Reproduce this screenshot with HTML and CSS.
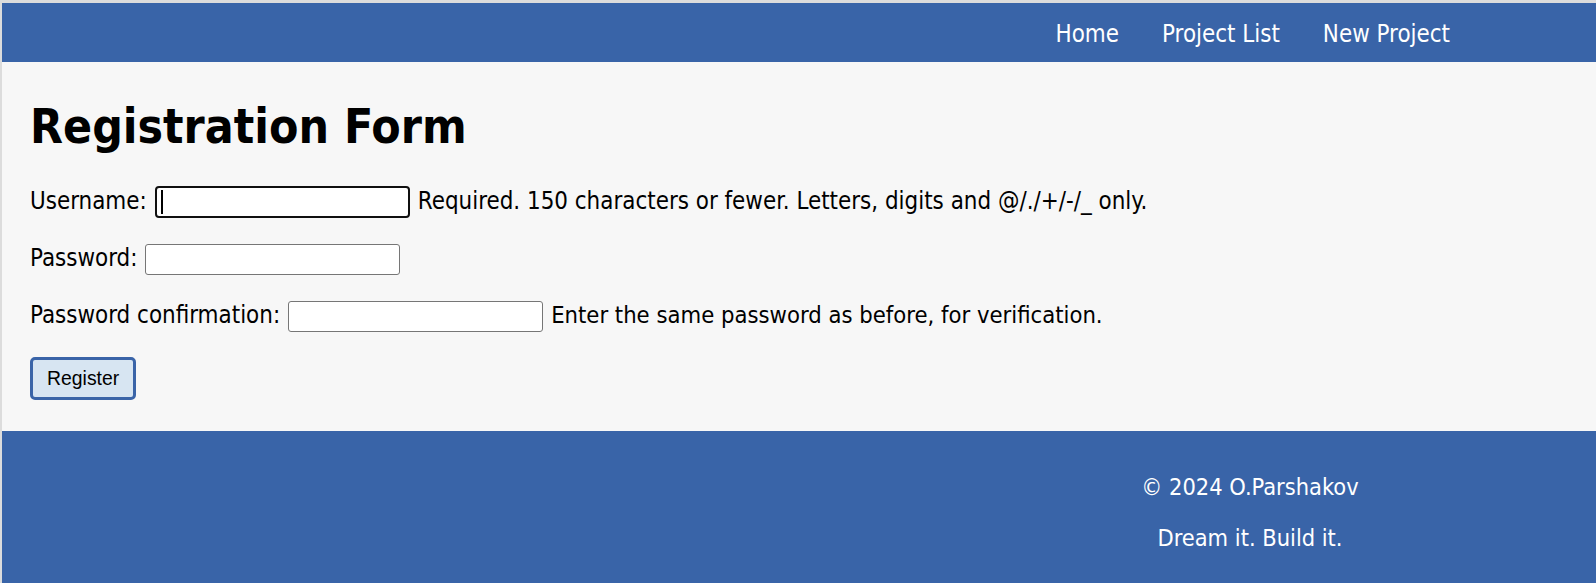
FILE: index.html
```html
<!DOCTYPE html>
<html lang="en">
<head>
<meta charset="utf-8">
<title>Registration Form</title>
<link rel="stylesheet" href="styles.css">
</head>
<body>
<header class="site-header">
  <nav class="nav">
    <a class="nav-link" href="#">Home</a>
    <a class="nav-link" href="#">Project List</a>
    <a class="nav-link" href="#">New Project</a>
  </nav>
</header>
<main class="content">
  <h1 class="title">Registration Form</h1>
  <form class="form">
    <div class="row">
      <label class="label" for="id_username">Username:</label>
      <span class="field">
        <input class="input input-focused" id="id_username" type="text">
        <span class="caret"></span>
      </span>
      <span class="help">Required. 150 characters or fewer. Letters, digits and @/./+/-/_ only.</span>
    </div>
    <div class="row">
      <label class="label" for="id_password1">Password:</label>
      <span class="field"><input class="input" id="id_password1" type="password"></span>
    </div>
    <div class="row">
      <label class="label" for="id_password2">Password confirmation:</label>
      <span class="field"><input class="input" id="id_password2" type="password"></span>
      <span class="help help-narrow">Enter the same password as before, for verification.</span>
    </div>
    <div class="actions">
      <button class="btn" type="button">Register</button>
    </div>
  </form>
</main>
<footer class="site-footer">
  <div class="footer-inner">
    <p class="footer-line">© 2024 O.Parshakov</p>
    <p class="footer-line">Dream it. Build it.</p>
  </div>
</footer>
</body>
</html>
```
FILE: styles.css
```css
* {
  box-sizing: border-box;
}

html {
  background: #dcdcdc;
}

body {
  margin: 0;
  padding: 3px 0 0 2px;
  background: #dcdcdc;
  font-family: "DejaVu Sans Condensed", "DejaVu Sans", sans-serif;
  font-stretch: condensed;
  font-size: 23.9px;
  line-height: 28px;
  color: #000;
}

.site-header {
  height: 59px;
  background: #3964a8;
  display: flex;
  justify-content: flex-end;
  align-items: center;
  padding: 2px 146px 0 0;
}

.nav {
  display: flex;
  gap: 43px;
}

.nav-link {
  color: #fff;
  text-decoration: none;
}

.content {
  background: #f7f7f7;
  padding: 37px 28px 31px;
}

.title {
  margin: 0;
  font-size: 47.7px;
  line-height: 56px;
  font-weight: bold;
}

.form {
  margin-top: 30px;
  display: flex;
  flex-direction: column;
  gap: 23.3px;
}

.row {
  height: 34px;
  display: flex;
  align-items: center;
  column-gap: 8px;
}

.label,
.help {
  padding-bottom: 3px;
  white-space: nowrap;
}

.help-narrow {
  font-size: 23.6px;
}

.field {
  position: relative;
  display: flex;
}

.input {
  width: 255px;
  height: 31px;
  margin: 0;
  border: 1px solid #767676;
  border-radius: 3px;
  background: #fff;
  padding: 0 6px;
  font: inherit;
}

.input-focused {
  height: 32px;
  border: 2px solid #101010;
  border-radius: 4px;
  outline: none;
}

.caret {
  position: absolute;
  left: 6px;
  top: 4px;
  width: 2px;
  height: 24px;
  background: #000;
}

.actions {
  display: flex;
}

.btn {
  height: 43px;
  padding: 0 14px;
  border: 3px solid #3a64a8;
  border-radius: 5px;
  background: #d7e5f2;
  color: #000;
  font-family: "Liberation Sans", Arial, sans-serif;
  font-size: 19.4px;
  line-height: 22px;
}

.site-footer {
  background: #3964a8;
  color: #fff;
  display: flex;
  justify-content: flex-end;
  padding: 42px 146px 42px 0;
}

.footer-inner {
  width: 400px;
  font-size: 23.4px;
  text-align: center;
}

.footer-line {
  margin: 0;
}

.footer-line + .footer-line {
  margin-top: 23px;
}
```
